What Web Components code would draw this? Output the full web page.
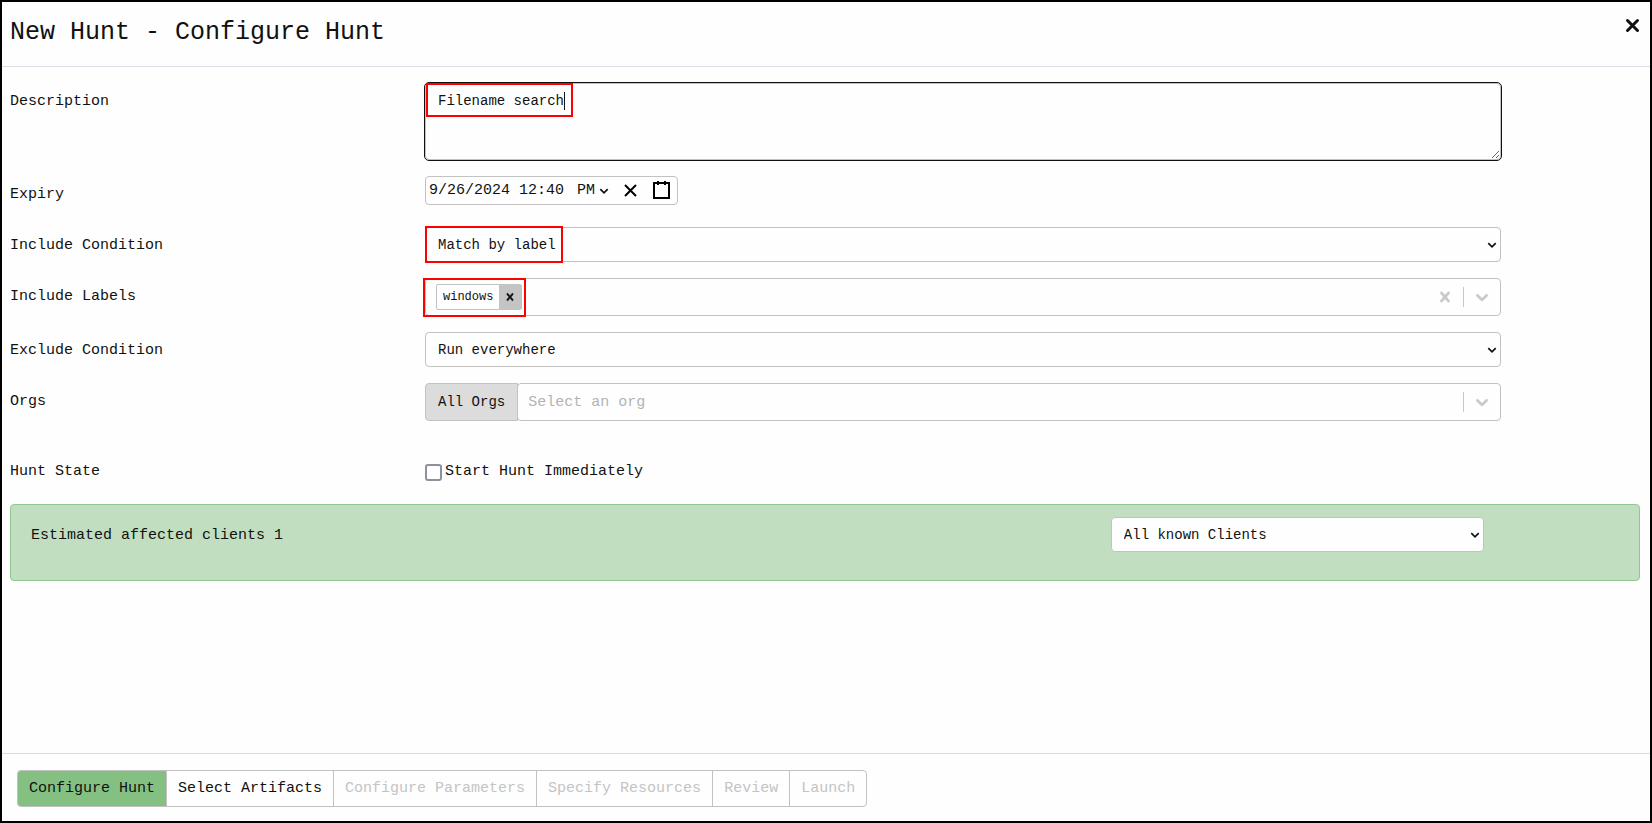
<!DOCTYPE html>
<html lang="en">
<head>
<meta charset="utf-8">
<title>New Hunt - Configure Hunt</title>
<style>
  body {
    margin: 0;
    background: #fefefe;
    color: #111;
    font-family: "Liberation Mono", monospace;
    font-size: 15px;
  }
</style>
</head>
<body>
<hunt-wizard heading="New Hunt - Configure Hunt">
  <hunt-form></hunt-form>
  <wizard-steps slot="footer"></wizard-steps>
</hunt-wizard>

<script>
const DOWN_PATH = "M4.516 7.548c0.436-0.446 1.043-0.481 1.576 0l3.908 3.747 3.908-3.747c0.533-0.481 1.141-0.446 1.574 0 0.436 0.445 0.408 1.197 0 1.615-0.406 0.418-4.695 4.502-4.695 4.502-0.217 0.223-0.502 0.335-0.787 0.335s-0.57-0.112-0.789-0.335c0 0-4.287-4.084-4.695-4.502s-0.436-1.17 0-1.615z";
const CROSS_PATH = "M14.348 14.849c-0.469 0.469-1.229 0.469-1.697 0l-2.651-3.030-2.651 3.029c-0.469 0.469-1.229 0.469-1.697 0-0.469-0.469-0.469-1.229 0-1.697l2.758-3.15-2.759-3.152c-0.469-0.469-0.469-1.228 0-1.697s1.228-0.469 1.697 0l2.652 3.031 2.651-3.031c0.469-0.469 1.228-0.469 1.697 0s0.469 1.229 0 1.697l-2.758 3.152 2.758 3.15c0.469 0.469 0.469 1.229 0 1.698z";

const icon = (path, size) =>
  `<svg width="${size}" height="${size}" viewBox="0 0 20 20" fill="currentColor" stroke="currentColor" stroke-width="0.5" aria-hidden="true"><path d="${path}"/></svg>`;

// Dialog frame: title bar, body, footer
class HuntWizard extends HTMLElement {
  constructor() {
    super();
    this.attachShadow({ mode: "open" });
  }

  connectedCallback() {
    this.shadowRoot.innerHTML = `
      <style>
        :host {
          display: flex;
          flex-direction: column;
          box-sizing: border-box;
          min-height: 100vh;
          border: 2px solid #000;
        }
        header {
          display: flex;
          justify-content: space-between;
          align-items: flex-start;
          padding: 16px 10px 18px 8px;
          border-bottom: 1px solid #dedee6;
        }
        h1 {
          margin: 0;
          font-size: 25px;
          line-height: 30px;
          font-weight: normal;
        }
        button {
          display: flex;
          margin: 0;
          padding: 0;
          border: none;
          background: none;
          color: #111;
          cursor: pointer;
        }
        main { flex: 1; padding: 16px 0; }
        footer {
          padding: 16px 15px 14px;
          border-top: 1px solid #dcdcdc;
        }
      </style>
      <header>
        <h1>${this.getAttribute("heading")}</h1>
        <button type="button" aria-label="Close">
          <svg width="15" height="15" viewBox="0 0 15 15" fill="none" stroke="currentColor" stroke-width="3" stroke-linecap="round"><path d="M2.5 2.5l10 10M12.5 2.5l-10 10"/></svg>
        </button>
      </header>
      <main><slot></slot></main>
      <footer><slot name="footer"></slot></footer>
    `;
  }
}

// Label column, control column and an empty gutter
class FormRow extends HTMLElement {
  constructor() {
    super();
    this.attachShadow({ mode: "open" });
    this.shadowRoot.innerHTML = `
      <style>
        :host {
          display: grid;
          grid-template-columns: 3fr 8fr 1fr;
          min-height: 35px;
        }
        .label { padding: 3px 0 0 8px; line-height: 32px; }
        .control { min-width: 0; padding: 0 12px 0 11px; position: relative; }
      </style>
      <div class="label"><slot name="label"></slot></div>
      <div class="control"><slot></slot></div>
    `;
  }
}

// Drop-down arrow laid over a slotted select
class SelectBox extends HTMLElement {
  constructor() {
    super();
    this.attachShadow({ mode: "open" });
    this.shadowRoot.innerHTML = `
      <style>
        :host { display: grid; align-items: center; }
        slot, svg { grid-area: 1 / 1; }
        ::slotted(select) {
          grid-area: 1 / 1;
          appearance: none;
          box-sizing: border-box;
          width: 100%;
          height: 35px;
          margin: 0;
          padding: 0 24px 0 12px;
          border: 1px solid #c2c2c2;
          border-radius: 4px;
          background: #fefefe;
          color: #111;
          font: 14px "Liberation Mono", monospace;
        }
        :host([compact]) ::slotted(select) {
          height: 24px;
          padding: 0 12px 0 0;
          border: none;
          font-size: 15px;
        }
        svg {
          justify-self: end;
          margin-right: 4px;
          pointer-events: none;
          z-index: 1;
        }
        :host([compact]) svg { margin-right: 0; }
      </style>
      <slot></slot>
      <svg width="10" height="8" viewBox="0 0 10 8" fill="none" stroke="#111" stroke-width="1.7"><path d="M1.3 2.2L5 5.9l3.7-3.7"/></svg>
    `;
  }
}

// Searchable multi-value field
class TagField extends HTMLElement {
  constructor() {
    super();
    this.attachShadow({ mode: "open" });
  }

  connectedCallback() {
    const tag = this.getAttribute("tag");
    const label = this.getAttribute("label");
    const placeholder = this.getAttribute("placeholder") || "";

    this.shadowRoot.innerHTML = `
      <style>
        :host {
          display: flex;
          align-items: center;
          box-sizing: border-box;
          height: 38px;
          padding-left: 10px;
          border: 1px solid #c2c2c2;
          border-radius: 4px;
          background: #fefefe;
        }
        .tag {
          display: flex;
          border: 1px solid #c2c2c2;
          border-radius: 2px;
          font-size: 12px;
          line-height: 24px;
        }
        .tag span { padding: 0 6px; }
        .tag button { padding: 0 4px; background: #c4c4c4; color: #111; }
        input {
          flex: 1;
          min-width: 0;
          margin: 0;
          padding: 0;
          border: none;
          outline: none;
          background: none;
          font: 15px "Liberation Mono", monospace;
        }
        input::placeholder { color: #b3b3b3; opacity: 1; }
        button {
          display: flex;
          align-items: center;
          margin: 0;
          padding: 8px;
          border: none;
          background: none;
          color: #c8c8c8;
        }
        .line { align-self: stretch; width: 1px; margin: 8px 0; background: #c8c8c8; }
      </style>
      ${tag ? `<div class="tag"><span>${tag}</span><button type="button" aria-label="Remove ${tag}">${icon(CROSS_PATH, 14)}</button></div>` : ""}
      <input type="text" aria-label="${label}" placeholder="${placeholder}">
      ${tag ? `<button type="button" aria-label="Clear">${icon(CROSS_PATH, 20)}</button>` : ""}
      <span class="line"></span>
      <button type="button" aria-label="Open">${icon(DOWN_PATH, 20)}</button>
    `;
  }
}

class DateTimeField extends HTMLElement {
  constructor() {
    super();
    this.attachShadow({ mode: "open" });
    this.shadowRoot.innerHTML = `
      <style>
        :host {
          display: inline-flex;
          align-items: center;
          box-sizing: border-box;
          height: 29px;
          padding-left: 3px;
          border: 1px solid #c2c2c2;
          border-radius: 4px;
          vertical-align: top;
        }
        input {
          width: 15ch;
          margin: 0 13px 0 0;
          padding: 0;
          border: none;
          background: none;
          color: #111;
          font: 15px "Liberation Mono", monospace;
        }
        select-box { width: 32px; margin-right: 6px; }
        button {
          display: flex;
          margin: 0;
          padding: 4px 6px;
          border: none;
          background: none;
        }
        button svg { stroke: #000; stroke-width: 2; fill: none; }
      </style>
      <input type="text" aria-label="Expiry date and time" value="9/26/2024 12:40">
      <select-box compact>
        <select aria-label="AM or PM"><option>AM</option><option selected>PM</option></select>
      </select-box>
      <button type="button" aria-label="Clear date">
        <svg width="19" height="19" viewBox="0 0 19 19"><path d="M4 4l11 11M15 4L4 15"/></svg>
      </button>
      <button type="button" aria-label="Open calendar">
        <svg width="19" height="19" viewBox="0 0 19 19"><path d="M2 2h15v15H2zM6 0v4M13 0v4"/></svg>
      </button>
    `;
  }
}

class HuntForm extends HTMLElement {
  constructor() {
    super();
    this.attachShadow({ mode: "open" });
    this.shadowRoot.innerHTML = `
      <style>
        :host { display: flex; flex-direction: column; gap: 16px; }
        textarea {
          display: block;
          box-sizing: border-box;
          width: 100%;
          height: 77px;
          margin: 0;
          padding: 6px 12px;
          border: 1px solid #c2c2c2;
          border-radius: 4px;
          outline: 1px solid #111;
          background: #fefefe;
          color: #111;
          font: 14px/22px "Liberation Mono", monospace;
          resize: vertical;
        }
        .orgs { display: flex; }
        .orgs button {
          height: 38px;
          margin: 0;
          padding: 0 12px;
          border: 1px solid #c2c2c2;
          border-radius: 4px 0 0 4px;
          background: #dcdcdc;
          color: #111;
          font: 14px "Liberation Mono", monospace;
        }
        .orgs tag-field { flex: 1; margin-left: -1px; }
        .state { margin-top: 16px; }
        .check {
          display: flex;
          align-items: center;
          gap: 3px;
          padding-top: 3px;
          line-height: 32px;
        }
        .check input {
          appearance: none;
          box-sizing: border-box;
          width: 17px;
          height: 17px;
          margin: 0;
          border: 2px solid #8f8f9d;
          border-radius: 3px;
          background: #fff;
        }
        .estimate {
          display: grid;
          grid-template-columns: 136fr 47fr 17fr;
          box-sizing: border-box;
          height: 77px;
          margin: 0 10px 0 8px;
          padding: 12px 20px;
          border: 1px solid #8fc98f;
          border-radius: 4px;
          background: #c1dfc0;
          line-height: 32px;
        }
        .estimate label { padding-top: 3px; }
        .estimate select-box { align-self: start; }
        /* Callout frames over the fields */
        .mark {
          position: absolute;
          box-sizing: border-box;
          border: 2px solid #f00;
          pointer-events: none;
          z-index: 2;
        }
        .mark-description { left: 12px; top: 0; width: 147px; height: 34px; }
        .mark-condition { left: 11px; top: -1px; width: 138px; height: 37px; }
        .mark-labels { left: 9px; top: 0; width: 103px; height: 39px; }
        .caret {
          position: absolute;
          right: 6px;
          top: 7px;
          width: 1px;
          height: 18px;
          background: #111;
        }
      </style>

      <form-row>
        <label slot="label" for="description">Description</label>
        <textarea id="description">Filename search</textarea>
        <div class="mark mark-description"><span class="caret"></span></div>
      </form-row>

      <form-row>
        <label slot="label" for="expiry">Expiry</label>
        <date-time-field id="expiry"></date-time-field>
      </form-row>

      <form-row>
        <label slot="label" for="include">Include Condition</label>
        <select-box>
          <select id="include"><option>Run everywhere</option><option selected>Match by label</option></select>
        </select-box>
        <div class="mark mark-condition"></div>
      </form-row>

      <form-row>
        <label slot="label" for="labels">Include Labels</label>
        <tag-field id="labels" label="Include Labels" tag="windows"></tag-field>
        <div class="mark mark-labels"></div>
      </form-row>

      <form-row>
        <label slot="label" for="exclude">Exclude Condition</label>
        <select-box>
          <select id="exclude"><option>Run everywhere</option></select>
        </select-box>
      </form-row>

      <form-row>
        <label slot="label" for="orgs">Orgs</label>
        <div class="orgs">
          <button type="button">All Orgs</button>
          <tag-field id="orgs" label="Orgs" placeholder="Select an org"></tag-field>
        </div>
      </form-row>

      <form-row class="state">
        <span slot="label">Hunt State</span>
        <div class="check">
          <input type="checkbox" id="start">
          <label for="start">Start Hunt Immediately</label>
        </div>
      </form-row>

      <div class="estimate">
        <label for="clients">Estimated affected clients 1</label>
        <select-box>
          <select id="clients"><option>All known Clients</option></select>
        </select-box>
      </div>
    `;
  }
}

class WizardSteps extends HTMLElement {
  constructor() {
    super();
    this.attachShadow({ mode: "open" });
  }

  connectedCallback() {
    const steps = [
      { name: "Configure Hunt", active: true },
      { name: "Select Artifacts" },
      { name: "Configure Parameters", disabled: true },
      { name: "Specify Resources", disabled: true },
      { name: "Review", disabled: true },
      { name: "Launch", disabled: true },
    ];

    this.shadowRoot.innerHTML = `
      <style>
        :host { display: block; }
        nav { display: flex; }
        button {
          height: 37px;
          margin: 0 0 0 -1px;
          padding: 0 11px;
          border: 1px solid #c2c2c2;
          background: #fefefe;
          color: #111;
          font: 15px "Liberation Mono", monospace;
        }
        button:first-child { margin-left: 0; border-radius: 4px 0 0 4px; }
        button:last-child { border-radius: 0 4px 4px 0; }
        button:disabled { color: #c4c4c4; }
        .active { background: #85c083; }
      </style>
      <nav>
        ${steps.map((s) => `<button type="button" class="${s.active ? "active" : ""}" ${s.disabled ? "disabled" : ""}>${s.name}</button>`).join("")}
      </nav>
    `;
  }
}

customElements.define("select-box", SelectBox);
customElements.define("tag-field", TagField);
customElements.define("date-time-field", DateTimeField);
customElements.define("form-row", FormRow);
customElements.define("hunt-form", HuntForm);
customElements.define("wizard-steps", WizardSteps);
customElements.define("hunt-wizard", HuntWizard);
</script>
</body>
</html>
